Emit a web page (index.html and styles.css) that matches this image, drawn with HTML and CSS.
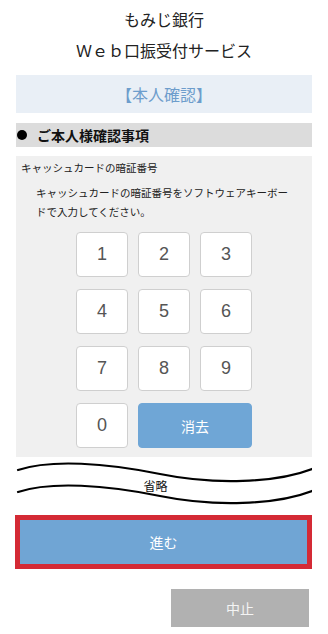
FILE: index.html
```html
<!DOCTYPE html>
<html lang="ja">
<head>
<meta charset="utf-8">
<title>もみじ銀行 Web口振受付サービス</title>
<link rel="stylesheet" href="styles.css">
</head>
<body>
<div class="page">
  <header class="title">
    <div class="title-line">もみじ銀行</div>
    <div class="title-line">Ｗｅｂ口振受付サービス</div>
  </header>
  <div class="banner">【本人確認】</div>
  <div class="section-head"><span class="dot"></span><span>ご本人様確認事項</span></div>
  <div class="panel">
    <div class="panel-label">キャッシュカードの暗証番号</div>
    <p class="panel-text">キャッシュカードの暗証番号をソフトウェアキーボードで入力してください。</p>
    <div class="keypad">
      <button class="key">1</button>
      <button class="key">2</button>
      <button class="key">3</button>
      <button class="key">4</button>
      <button class="key">5</button>
      <button class="key">6</button>
      <button class="key">7</button>
      <button class="key">8</button>
      <button class="key">9</button>
      <button class="key">0</button>
      <button class="key key-clear">消去</button>
    </div>
  </div>
  <svg class="omit" width="296" height="58" viewBox="0 0 296 58">
    <path d="M2,13 C35,2 90,6 144,17 C198,28 260,26 296,12" fill="none" stroke="#000" stroke-width="2.2" stroke-linecap="round"/>
    <path d="M2,35 C35,24 90,28 144,39 C198,50 260,48 296,34" fill="none" stroke="#000" stroke-width="2.2" stroke-linecap="round"/>
    <text x="139.5" y="33.5" text-anchor="middle" class="omit-text">省略</text>
  </svg>
  <button class="btn-next">進む</button>
  <div class="cancel-row"><button class="btn-cancel">中止</button></div>
</div>
</body>
</html>
```
FILE: styles.css
```css
* { box-sizing: border-box; }
html, body { margin: 0; padding: 0; background: #fff; }
body {
  font-family: "Noto Sans CJK JP", "Noto Sans", sans-serif;
  color: #222;
}
.page {
  width: 328px;
  padding: 4px 16px 0;
}
.title {
  text-align: center;
  font-size: 16px;
  color: #222;
}
.title-line {
  line-height: 31px;
}
.banner {
  margin-top: 9px;
  height: 38px;
  background: #e9eff6;
  color: #6d9dcc;
  font-size: 16px;
  display: flex;
  align-items: center;
  justify-content: center;
}
.section-head {
  margin-top: 10px;
  height: 24px;
  background: #dcdcdc;
  display: flex;
  align-items: center;
  font-size: 14px;
  font-weight: bold;
  color: #111;
}
.dot {
  width: 10px;
  height: 10px;
  border-radius: 50%;
  background: #000;
  margin-left: 1px;
  margin-right: 10px;
}
.panel {
  margin-top: 9px;
  background: #f0f0f0;
  padding: 3px 20px 9px 5px;
}
.panel-label {
  font-size: 10.5px;
  line-height: 18px;
  color: #222;
}
.panel-text {
  margin: 6px 0 0 15px;
  font-size: 10.5px;
  line-height: 19px;
  color: #222;
}
.keypad {
  margin: 11px auto 0;
  padding-left: 15px;
  display: grid;
  grid-template-columns: repeat(3, 52px);
  grid-auto-rows: 45px;
  column-gap: 10px;
  row-gap: 12px;
  justify-content: center;
}
.key {
  background: #fff;
  border: 1px solid #cfcfcf;
  border-radius: 4px;
  font-family: "Liberation Sans", "Noto Sans CJK JP", sans-serif;
  font-size: 18px;
  color: #555;
  padding: 0;
  margin: 0;
}
.key-clear {
  grid-column: span 2;
  background: #6fa6d6;
  border-color: #6fa6d6;
  color: #fff;
  font-family: "Noto Sans CJK JP", sans-serif;
  font-size: 14px;
}
.omit {
  display: block;
}
.omit-text {
  font-family: "Noto Sans CJK JP", sans-serif;
  font-size: 12px;
  fill: #111;
}
.btn-next {
  display: block;
  width: 297px;
  height: 54px;
  margin: 0 0 0 -1px;
  background: #70a5d4;
  border: 5px solid #d42a35;
  color: #fff;
  font-family: "Noto Sans CJK JP", sans-serif;
  font-size: 14px;
  padding: 0;
}
.cancel-row {
  margin-top: 20px;
  display: flex;
  justify-content: flex-end;
  padding-right: 3px;
}
.btn-cancel {
  width: 138px;
  height: 38px;
  background: #b1b1b1;
  border: none;
  color: #f4f4f4;
  font-family: "Noto Sans CJK JP", sans-serif;
  font-size: 14px;
  padding: 0;
}
```
